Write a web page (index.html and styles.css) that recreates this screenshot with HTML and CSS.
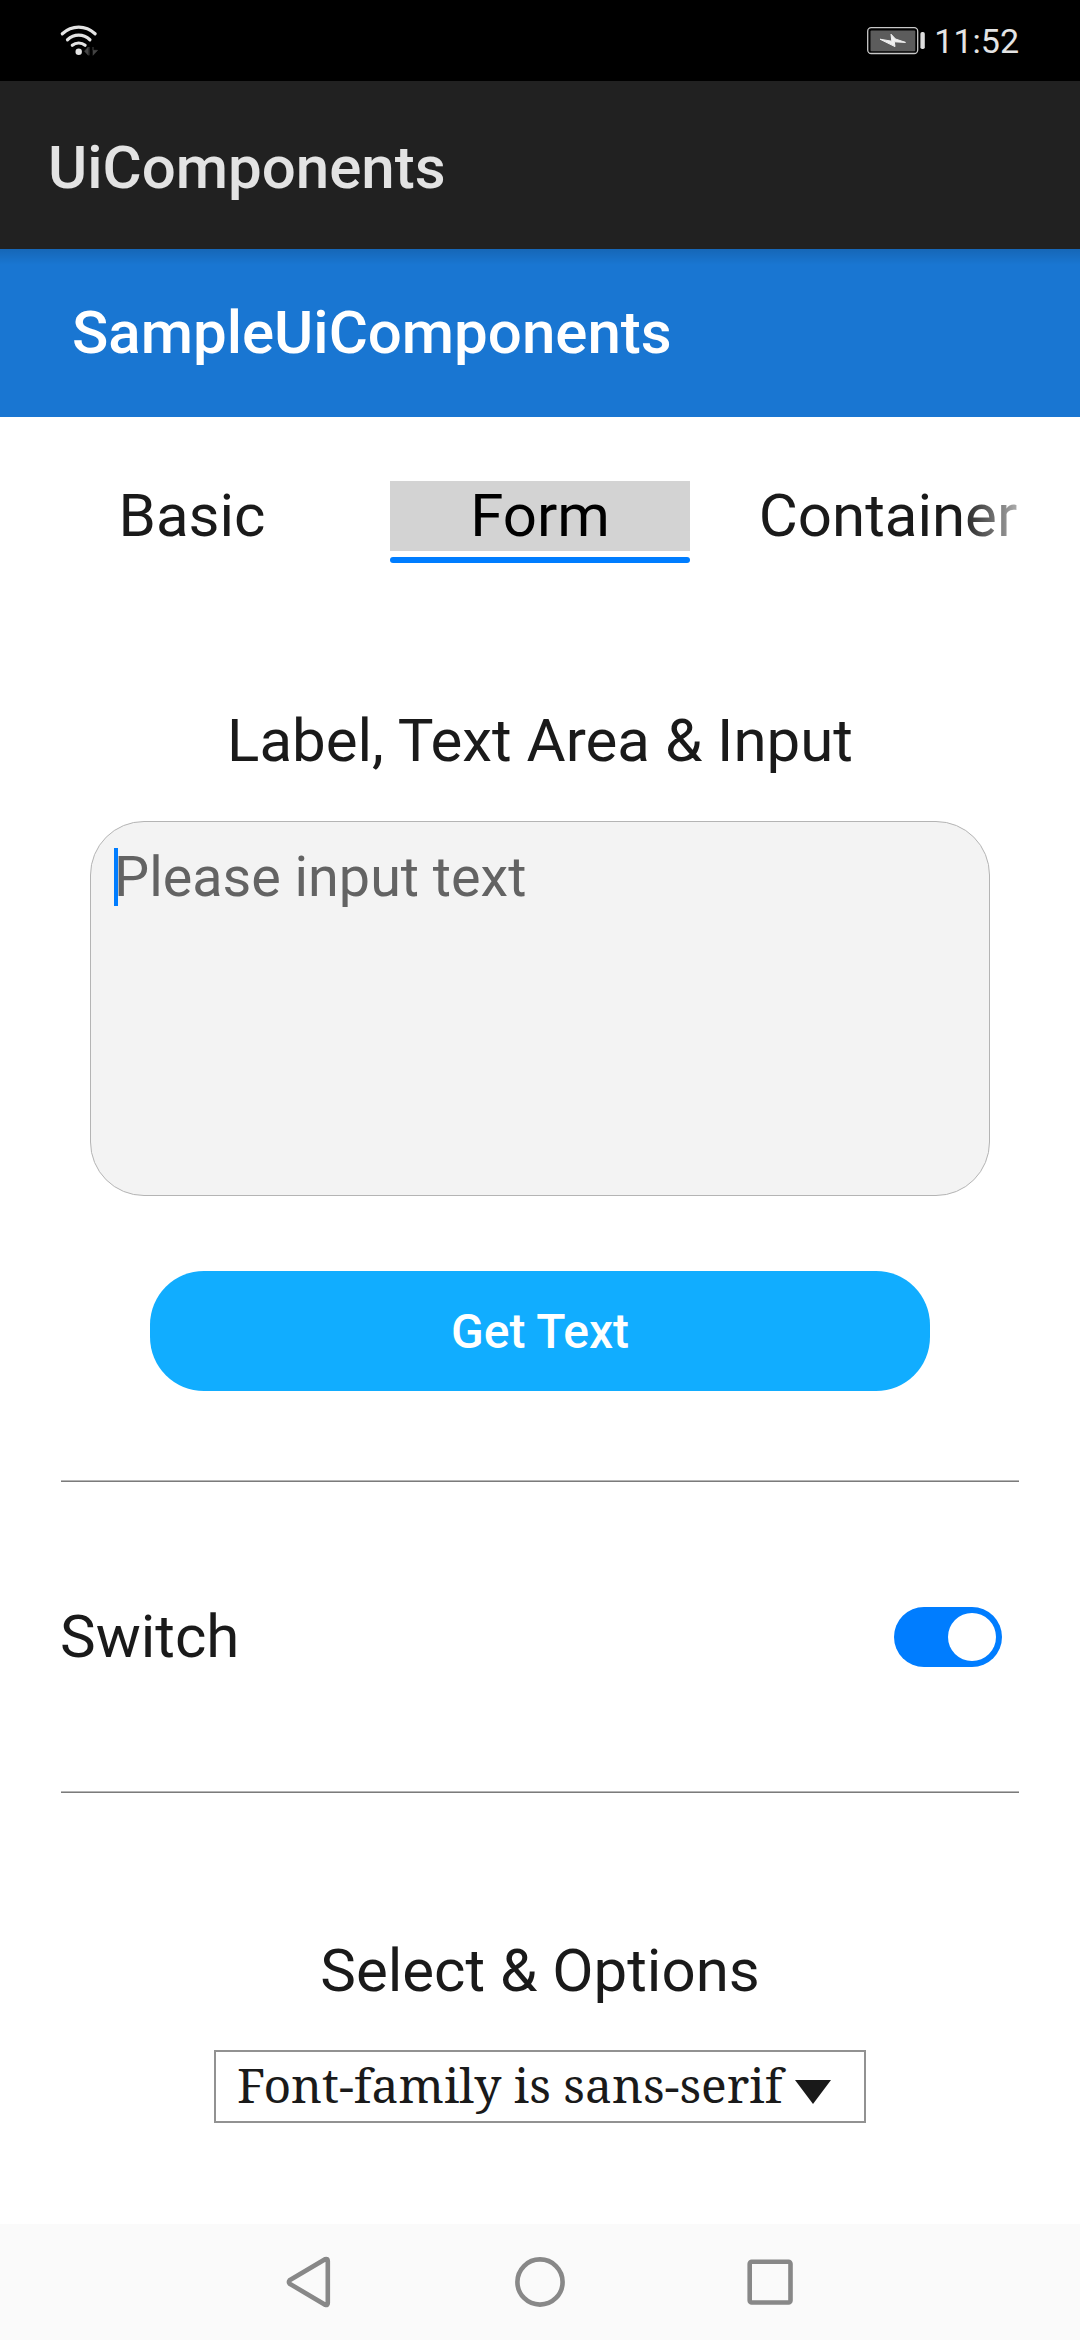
FILE: index.html
```html
<!DOCTYPE html>
<html lang="en">
<head>
<meta charset="utf-8">
<title>UiComponents</title>
<link rel="stylesheet" href="styles.css">
</head>
<body>
<div class="screen">
  <div class="status-bar">
    <svg class="wifi" width="40" height="34" viewBox="58 24 40 34" fill="none" stroke="#e4e4e4" stroke-width="3.2" stroke-linecap="round">
      <path d="M62.3 33.8Q69.5 27.2 78.7 27.2T95.1 33.8"/>
      <path d="M67.5 39.8Q72.5 35.2 78.7 35.2T89.9 39.8"/>
      <path d="M72.3 45.2Q75 43 78.7 43T85.1 45.2"/>
      <circle cx="78.7" cy="51.7" r="3.2" fill="#e4e4e4" stroke="none"/>
      <path d="M84.5 51.2L88.3 47V55.3ZM93 47V55.3L97.6 50.3H93ZM89.2 47V55.3" fill="#444" stroke="#444" stroke-width=".6" stroke-linecap="butt"/>
    </svg>
    <div class="status-right">
      <svg width="60" height="30" viewBox="866 26 60 30">
        <rect x="867.7" y="27.7" width="50" height="25.8" rx="3.5" fill="none" stroke="#c8c8c8" stroke-width="1.3"/>
        <rect x="870.5" y="30.5" width="44.8" height="20.8" rx="1" fill="#5c5c5c"/>
        <rect x="920.4" y="32" width="4.4" height="17" rx="1.8" fill="#dedede"/>
        <path d="M880 39.2L891.8 41.2L891 34.2L895.5 39L905.5 42.4L894.3 41.8L895 46.6Z" fill="#efefef" stroke="#efefef"/>
      </svg>
      <span class="clock">11:52</span>
    </div>
  </div>
  <header class="app-bar">UiComponents</header>
  <main class="content">
    <div class="title-bar">SampleUiComponents</div>
    <nav class="tabs">
      <div class="tab">Basic</div>
      <div class="tab tab-active">Form</div>
      <div class="tab">Container</div>
    </nav>
    <section class="form">
      <label class="heading">Label, Text Area &amp; Input</label>
      <div class="text-area"><span class="caret"></span><span class="placeholder">Please input text</span></div>
      <button class="button">Get Text</button>
    </section>
    <div class="divider"></div>
    <section class="switch-row">
      <span>Switch</span>
      <span class="toggle"><span class="thumb"></span></span>
    </section>
    <div class="divider"></div>
    <section class="select-section">
      <div class="heading">Select &amp; Options</div>
      <div class="select">
        <span class="select-value">Font-family is sans-serif</span>
        <svg class="arrow" width="36" height="24" viewBox="0 0 36 24"><path d="M0 0H36L18 24Z" fill="#191919"/></svg>
      </div>
    </section>
  </main>
  <footer class="nav-bar">
    <svg width="60" height="60" viewBox="280 2252 60 60"><path d="M289.6 2280.3L325.2 2259.2Q327.8 2258.4 327.8 2261V2303Q327.8 2305.6 325.2 2304.8L289.6 2283.7Q288.3 2282 289.6 2280.3Z"/></svg>
    <svg width="60" height="60" viewBox="510 2252 60 60"><circle cx="540" cy="2282" r="22.6"/></svg>
    <svg width="60" height="60" viewBox="739 2252 60 60"><rect x="748.7" y="2261.7" width="40.8" height="40.8" rx="2"/></svg>
  </footer>
</div>
</body>
</html>
```
FILE: styles.css
```css
* { box-sizing: border-box; }

body {
  margin: 0;
  background: #fff;
  color: #1a1a1a;
  font-family: Roboto, sans-serif;
  font-size: 60px;
  line-height: 70px;
}

svg { display: block; }

.screen {
  display: flex;
  flex-direction: column;
  width: 1080px;
  height: 2340px;
  overflow: hidden;
}

.status-bar {
  display: flex;
  justify-content: space-between;
  height: 81px;
  padding: 24px 61px 0 58px;
  background: #000;
}

.status-right {
  display: flex;
  gap: 8px;
  padding-top: 2px;
}

.clock {
  color: #e4e4e4;
  font-size: 34px;
  line-height: 30px;
}

.app-bar {
  height: 168px;
  padding: 52px 48px 0;
  background: #212121;
  color: #e3e3e3;
  font-weight: 500;
}

.content {
  display: flex;
  flex: 1;
  flex-direction: column;
}

.title-bar {
  height: 168px;
  padding: 49px 72px 0;
  background: linear-gradient(rgba(0, 0, 0, 0.13), transparent 16px) #1976d2;
  color: #fff;
  font-weight: 500;
}

.tabs {
  display: flex;
  justify-content: center;
  gap: 48px;
  margin: 64px 60px 0;
  overflow: hidden;
  -webkit-mask-image: linear-gradient(to right, #000 900px, transparent 990px);
  mask-image: linear-gradient(to right, #000 900px, transparent 990px);
}

.tab {
  flex: 0 0 300px;
  height: 82px;
  text-align: center;
}

.tab-active {
  background:
    linear-gradient(#d3d3d3, #d3d3d3) 0 0 / 100% 70px no-repeat;
  color: #000;
}

.tab-active::after {
  content: "";
  display: block;
  height: 6px;
  margin-top: 6px;
  border-radius: 3px;
  background: #007dff;
}

.form {
  display: flex;
  flex-direction: column;
  align-items: center;
  padding-top: 143px;
}

.text-area {
  display: flex;
  width: 900px;
  height: 375px;
  margin-top: 45px;
  padding: 26px 23px;
  border: 1px solid #b4b4b4;
  border-radius: 54px;
  background: #f3f3f3;
}

.caret {
  width: 4px;
  height: 58px;
  background: #007dff;
}

.placeholder {
  margin-left: -4px;
  color: #636363;
  font-size: 55.7px;
  line-height: 58px;
}

.button {
  width: 780px;
  height: 120px;
  margin: 75px 0 89px;
  padding: 2px 0 0;
  border: 0;
  border-radius: 54px;
  background: #11adff;
  color: #fff;
  font: 500 48px/56px Roboto, sans-serif;
}

.divider {
  height: 2px;
  margin: 0 61px;
  border-top: 1px solid #b5b5b5;
  background: #7b7b7b;
}

.switch-row {
  display: flex;
  align-items: center;
  justify-content: space-between;
  height: 309px;
  padding: 0 78px 0 60px;
}

.toggle {
  display: flex;
  justify-content: flex-end;
  width: 108px;
  height: 60px;
  padding: 6px;
  border-radius: 30px;
  background: #007dff;
}

.thumb {
  width: 48px;
  border-radius: 50%;
  background: #fff;
}

.select-section {
  display: flex;
  flex-direction: column;
  align-items: center;
  padding-top: 143px;
}

.select {
  display: flex;
  width: 652px;
  height: 73px;
  margin-top: 44px;
  padding: 0 21px;
  border: 2px solid #929292;
}

.select-value {
  width: 558px;
  font-family: "Noto Serif", "Liberation Serif", serif;
  font-size: 48px;
  line-height: 65px;
  white-space: nowrap;
}

.arrow { margin-top: 28px; }

.nav-bar {
  display: flex;
  justify-content: center;
  gap: 170px;
  height: 116px;
  padding-top: 28px;
  background: #fafafa;
}

.nav-bar svg {
  fill: none;
  stroke: #888;
  stroke-width: 4.6;
}
```
